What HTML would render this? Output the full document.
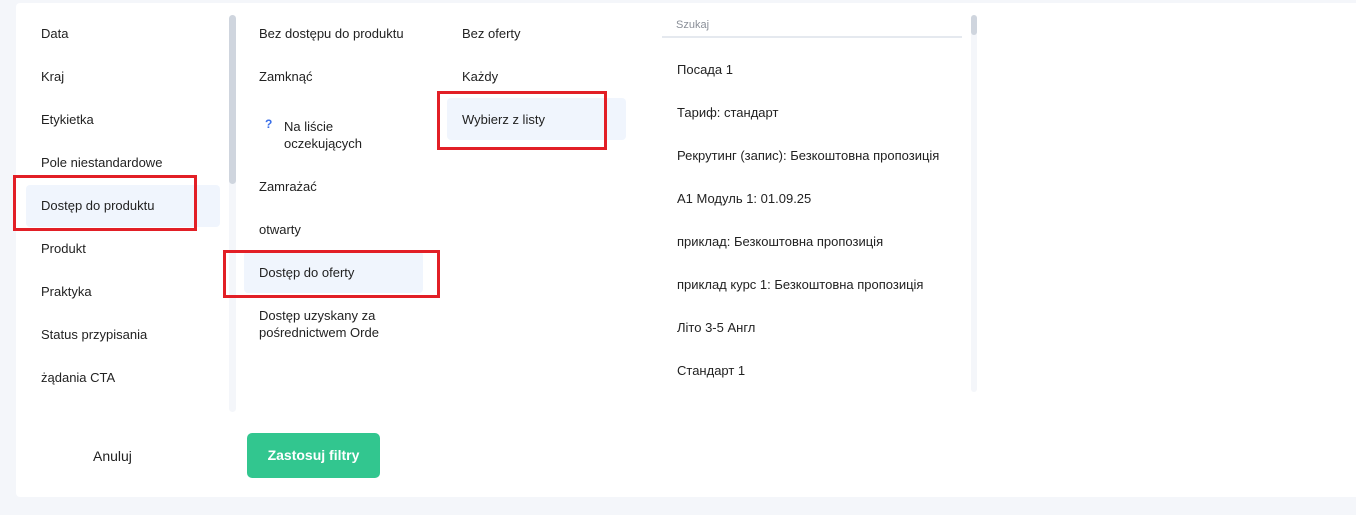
<!DOCTYPE html>
<html><head><meta charset="utf-8"><style>
body{margin:0;width:1356px;height:515px;background:#f4f6fa;font-family:"Liberation Sans",sans-serif;font-size:13px;color:#222;position:relative;overflow:hidden}
.p{position:absolute;left:16px;top:3px;width:1345px;height:494px;background:#fff;border-radius:4px}
.t{position:absolute;white-space:nowrap;line-height:17px}
.hl{position:absolute;background:#f0f5fd;border-radius:4px}
.r{position:absolute;border:3px solid #e21f26;box-sizing:border-box}
.tr{position:absolute;background:#f4f6fa;border-radius:4px}
.th{position:absolute;background:#cfd5de;border-radius:4px}
</style></head><body>
<div class="p"></div>
<div class="hl" style="left:26px;top:185px;width:194px;height:42px"></div>
<div class="hl" style="left:244px;top:251px;width:179px;height:42px"></div>
<div class="hl" style="left:447px;top:98px;width:179px;height:42px"></div>
<div class="tr" style="left:229px;top:15px;width:7px;height:397px"></div>
<div class="th" style="left:229px;top:15px;width:7px;height:169px"></div>
<div class="tr" style="left:971px;top:15px;width:6px;height:377px"></div>
<div class="th" style="left:971px;top:15px;width:6px;height:20px"></div>

<div class="t" style="left:41px;top:25px">Data</div>
<div class="t" style="left:41px;top:68px">Kraj</div>
<div class="t" style="left:41px;top:111px">Etykietka</div>
<div class="t" style="left:41px;top:154px">Pole niestandardowe</div>
<div class="t" style="left:41px;top:197px">Dostęp do produktu</div>
<div class="t" style="left:41px;top:240px">Produkt</div>
<div class="t" style="left:41px;top:283px">Praktyka</div>
<div class="t" style="left:41px;top:326px">Status przypisania</div>
<div class="t" style="left:41px;top:369px">żądania CTA</div>

<div class="t" style="left:259px;top:25px">Bez dostępu do produktu</div>
<div class="t" style="left:259px;top:68px">Zamknąć</div>
<div class="t" style="left:265px;top:116px;color:#3a6fe8;font-weight:bold;font-size:12px">?</div>
<div class="t" style="left:284px;top:118px">Na liście<br>oczekujących</div>
<div class="t" style="left:259px;top:178px">Zamrażać</div>
<div class="t" style="left:259px;top:221px">otwarty</div>
<div class="t" style="left:259px;top:264px">Dostęp do oferty</div>
<div class="t" style="left:259px;top:307px">Dostęp uzyskany za<br>pośrednictwem Orde</div>

<div class="t" style="left:462px;top:25px">Bez oferty</div>
<div class="t" style="left:462px;top:68px">Każdy</div>
<div class="t" style="left:462px;top:111px">Wybierz z listy</div>

<div class="t" style="left:676px;top:17px;font-size:11px;color:#8a8f98">Szukaj</div>
<div style="position:absolute;left:662px;top:36px;width:300px;height:2px;background:#e5e9ef"></div>
<div class="t" style="left:677px;top:61px">Посада 1</div>
<div class="t" style="left:677px;top:104px">Тариф: стандарт</div>
<div class="t" style="left:677px;top:147px">Рекрутинг (запис): Безкоштовна пропозиція</div>
<div class="t" style="left:677px;top:190px">А1 Модуль 1: 01.09.25</div>
<div class="t" style="left:677px;top:233px">приклад: Безкоштовна пропозиція</div>
<div class="t" style="left:677px;top:276px">приклад курс 1: Безкоштовна пропозиція</div>
<div class="t" style="left:677px;top:319px">Літо 3-5 Англ</div>
<div class="t" style="left:677px;top:362px">Стандарт 1</div>

<div class="r" style="left:13px;top:175px;width:184px;height:56px"></div>
<div class="r" style="left:437px;top:91px;width:170px;height:59px"></div>
<div class="r" style="left:223px;top:250px;width:217px;height:48px"></div>

<div class="t" style="left:93px;top:448px;font-size:14px">Anuluj</div>
<div style="position:absolute;left:247px;top:433px;width:133px;height:45px;background:#32c68f;border-radius:5px;color:#fff;font-weight:bold;font-size:14px;line-height:45px;text-align:center">Zastosuj filtry</div>
</body></html>
